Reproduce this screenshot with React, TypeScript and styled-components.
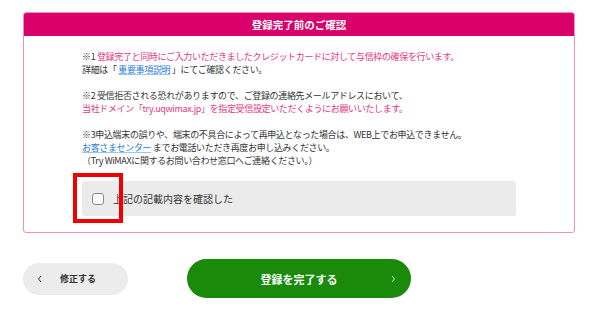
import React from 'react';
import styled, { createGlobalStyle } from 'styled-components';

const GlobalStyle = createGlobalStyle`
  html, body {
    margin: 0;
    padding: 0;
    background: #fff;
  }
  body {
    font-family: "Noto Sans CJK JP", "Noto Sans", sans-serif;
    color: #333;
  }
`;

const Page = styled.div`
  width: 552px;
  padding: 12px 0 0 23px;
`;

const Card = styled.section`
  border: 1px solid #f291b9;
  border-radius: 3px;
  box-sizing: border-box;
  height: 221px;
`;

const CardHeader = styled.h2`
  margin: 0;
  height: 23px;
  border-radius: 2px 2px 0 0;
  background: #d9006c;
  color: #fff;
  font-size: 10.5px;
  font-weight: 700;
  display: flex;
  align-items: center;
  justify-content: center;
`;

const CardBody = styled.div`
  padding: 14px 58px 0 58px;
  position: relative;
`;

const Notes = styled.div`
  font-size: 9px;
  line-height: 13px;
  color: #333;
  letter-spacing: -0.35px;
`;

const Note = styled.p`
  margin: 0 0 13px;
  &:last-child {
    margin-bottom: 0;
  }
`;

const Pink = styled.span`
  color: #e2387f;
`;

const Link = styled.a`
  color: #2b7cd6;
  text-decoration: underline;
  text-decoration-color: #9cc3ee;
`;

const ConfirmBox = styled.label`
  margin-top: 14px;
  height: 35px;
  background: #ebebeb;
  border-radius: 3px;
  display: flex;
  align-items: center;
  gap: 9px;
  padding-left: 10px;
  font-size: 10px;
  color: #333;
`;

const Check = styled.span`
  width: 10px;
  height: 10px;
  border: 1px solid #888;
  border-radius: 3px;
  background: #fff;
`;

const Marker = styled.div`
  position: absolute;
  left: 49px;
  top: 137px;
  width: 42px;
  height: 42px;
  border: 4px solid #f20000;
`;

const ButtonRow = styled.div`
  display: flex;
  align-items: center;
  gap: 59px;
  margin-top: 26px;
`;

const BackButton = styled.button`
  width: 105px;
  height: 32px;
  border: none;
  border-radius: 16px;
  background: #ececec;
  color: #333;
  font-family: inherit;
  font-size: 9px;
  font-weight: 700;
  display: flex;
  align-items: center;
  padding: 0 0 0 14px;
  gap: 17px;
`;

const SubmitButton = styled.button`
  width: 224px;
  height: 39px;
  border: none;
  border-radius: 20px;
  background: #1a8a0a;
  color: #fff;
  font-family: inherit;
  font-size: 11px;
  font-weight: 700;
  position: relative;
  display: flex;
  align-items: center;
  justify-content: center;
  padding: 0;
`;

const Chevron = styled.svg`
  width: 6px;
  height: 8px;
  flex: none;
`;

const SubmitChevron = styled.span`
  position: absolute;
  right: 15px;
  top: 50%;
  transform: translateY(-50%);
  display: flex;
`;

export default function App() {
  return (
    <Page>
      <GlobalStyle />
      <Card>
        <CardHeader>登録完了前のご確認</CardHeader>
        <CardBody>
          <Notes>
            <Note>
              ※1 <Pink>登録完了と同時にご入力いただきましたクレジットカードに対して与信枠の確保を行います。</Pink>
              <br />
              詳細は「 <Link href="#">重要事項説明</Link> 」にてご確認ください。
            </Note>
            <Note>
              ※2 受信拒否される恐れがありますので、ご登録の連絡先メールアドレスにおいて、
              <br />
              <Pink>当社ドメイン「try.uqwimax.jp」を指定受信設定いただくようにお願いいたします。</Pink>
            </Note>
            <Note>
              ※3申込端末の誤りや、端末の不具合によって再申込となった場合は、WEB上でお申込できません。
              <br />
              <Link href="#">お客さまセンター</Link> までお電話いただき再度お申し込みください。
              <br />
              （Try WiMAXに関するお問い合わせ窓口へご連絡ください。）
            </Note>
          </Notes>
          <ConfirmBox>
            <Check />
            上記の記載内容を確認した
          </ConfirmBox>
          <Marker />
        </CardBody>
      </Card>
      <ButtonRow>
        <BackButton>
          <Chevron viewBox="0 0 6 8">
            <path d="M4 1 L1.5 4 L4 7" fill="none" stroke="#333" strokeWidth="1" />
          </Chevron>
          修正する
        </BackButton>
        <SubmitButton>
          登録を完了する
          <SubmitChevron>
            <Chevron viewBox="0 0 6 8">
              <path d="M2 1 L4.5 4 L2 7" fill="none" stroke="#cfe6cb" strokeWidth="1" />
            </Chevron>
          </SubmitChevron>
        </SubmitButton>
      </ButtonRow>
    </Page>
  );
}
